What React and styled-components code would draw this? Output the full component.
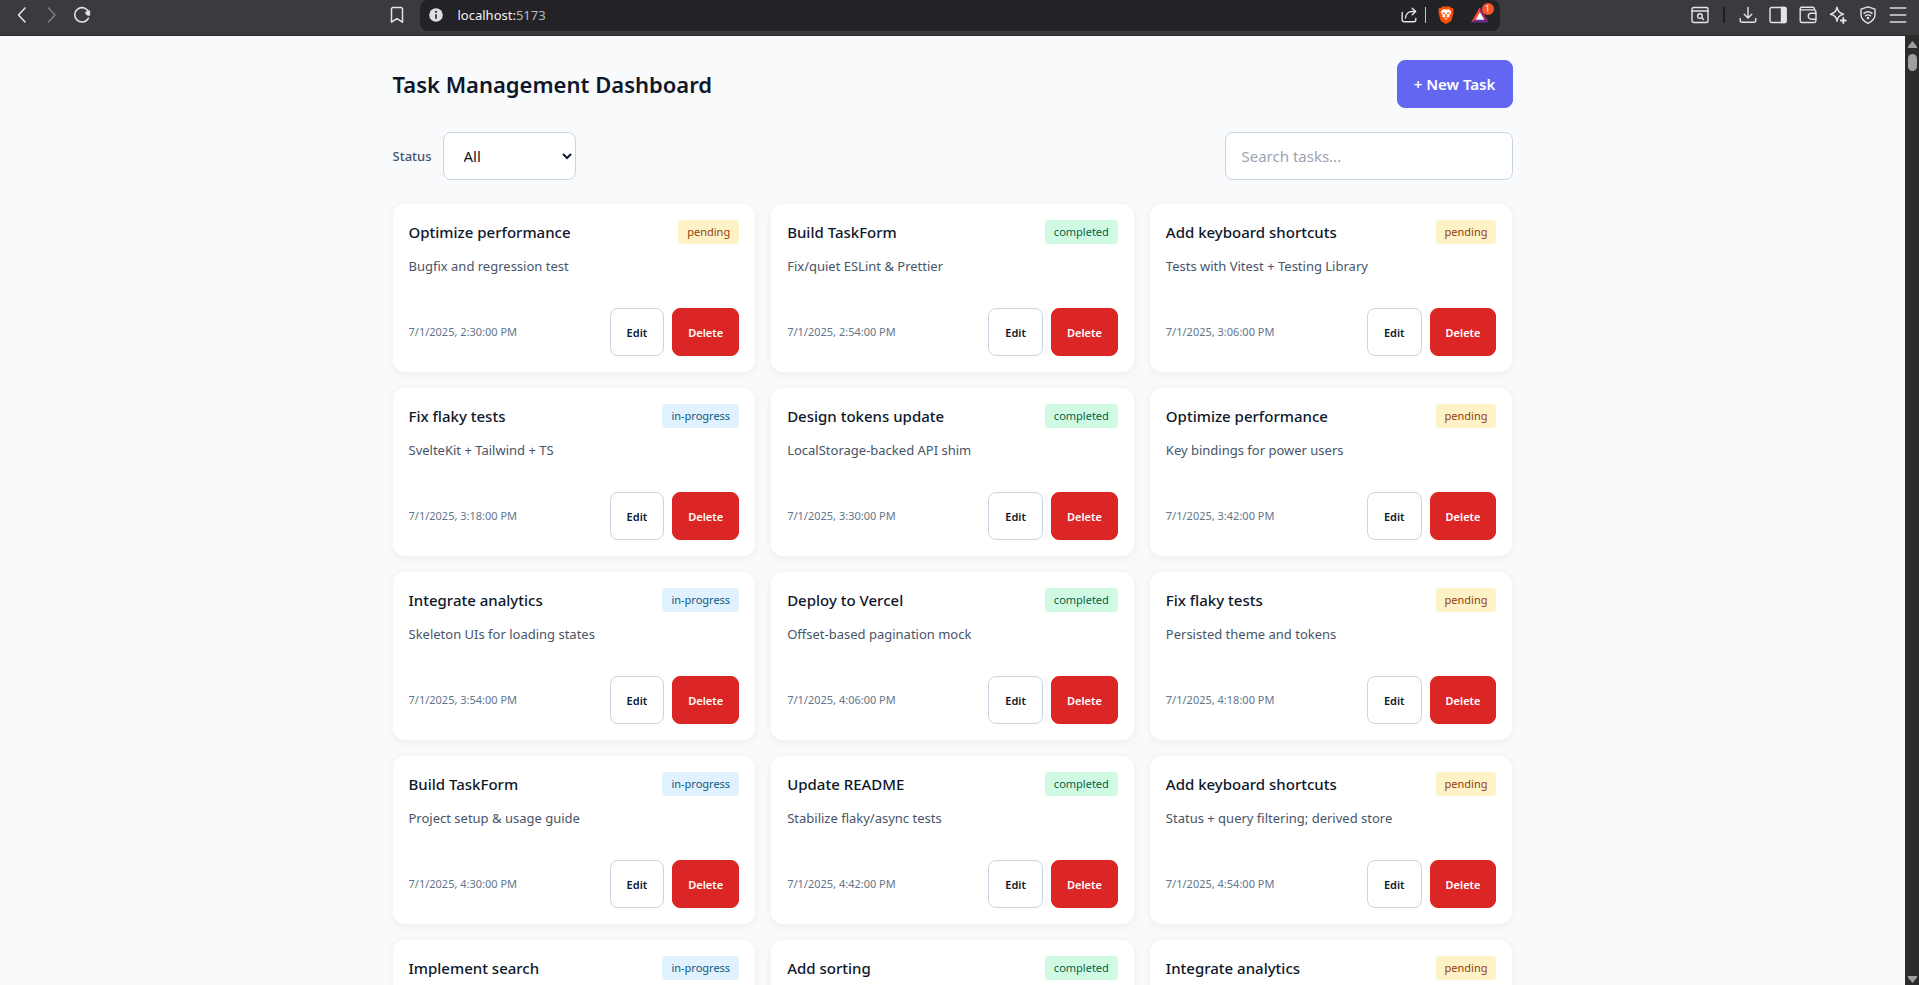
import React, { useState } from "react";
import styled, { createGlobalStyle, css } from "styled-components";

const GlobalStyle = createGlobalStyle`
  *, *::before, *::after { box-sizing: border-box; }
  body {
    margin: 0;
    font-family: "Segoe UI", "Noto Sans", "Open Sans", sans-serif;
    color: #0f172a;
    background: #f8fafc;
  }
  button, input, select { font: inherit; }
`;

/* ---------- browser frame ---------- */

const Window = styled.div`
  display: flex;
  flex-direction: column;
  height: 100vh;
`;

const Toolbar = styled.header`
  flex: none;
  display: grid;
  grid-template-columns: minmax(auto, 1fr) minmax(0, 1080px) minmax(auto, 1fr);
  height: 36px;
  background: #3b3a3f;
  border-bottom: 1px solid #2a292d;
`;

const ToolGroup = styled.div`
  display: flex;
  align-items: center;
  gap: ${(p) => p.$gap || 12}px;
  height: 30px;
`;

const NavTools = styled(ToolGroup)`
  padding: 0 16px 0 13px;
`;

const EndTools = styled(ToolGroup)`
  justify-content: flex-end;
  padding-right: 12px;
`;

const IconButton = styled.button`
  position: relative;
  display: flex;
  flex: none;
  padding: 0;
  border: 0;
  background: none;
  color: ${(p) => (p.$dim ? "#7d7c81" : "#e4e3e8")};
  cursor: pointer;

  svg { display: block; }
`;

const Push = styled.span`
  flex: 1;
`;

const ToolDivider = styled.span`
  width: ${(p) => (p.$light ? 1 : 2)}px;
  height: 16px;
  margin: 0 ${(p) => (p.$light ? 0 : 2)}px;
  background: ${(p) => (p.$light ? "#c4c3c8" : "#1f1e22")};
`;

const AddressBar = styled.div`
  display: flex;
  align-items: center;
  height: 31px;
  padding: 0 11px 1px 9px;
  gap: 12px;
  border-radius: 8px;
  background: #232227;
`;

const Address = styled.span`
  flex: 1;
  padding-left: 3px;
  font-size: 13px;
  line-height: 20px;
  color: #f2f2f5;
`;

const Port = styled.span`
  color: #b9b8be;
`;

const Count = styled.span`
  position: absolute;
  top: -4px;
  right: -5px;
  width: 12px;
  height: 12px;
  border-radius: 6px;
  background: #fb542b;
  color: #fff;
  font-size: 8px;
  line-height: 12px;
  text-align: center;
`;

const Body = styled.div`
  flex: 1;
  display: flex;
  min-height: 0;
`;

const Viewport = styled.div`
  flex: 1;
  min-width: 0;
  overflow-y: auto;
  scrollbar-width: none;
`;

const ScrollTrack = styled.div`
  flex: none;
  display: flex;
  flex-direction: column;
  align-items: center;
  width: 14px;
  padding: 5px 0 2px 1px;
  background: #2c2c2c;

  svg { display: block; flex: none; }
`;

const ScrollThumb = styled.span`
  width: 9px;
  height: 17px;
  margin: 6px 0 auto;
  border-radius: 5px;
  background: #9f9f9f;
`;

/* ---------- dashboard ---------- */

const Page = styled.main`
  max-width: 1152px;
  margin: 0 auto;
  padding: 24px 16px;
  display: flex;
  flex-direction: column;
  gap: 24px;
`;

const Bar = styled.div`
  display: flex;
  align-items: center;
  justify-content: space-between;
  gap: 16px;
`;

const Title = styled.h1`
  margin: 0;
  font-size: 22px;
  line-height: 32px;
  font-weight: 600;
`;

const variants = {
  primary: css`
    min-width: 116px;
    font-size: 15px;
    color: #fff;
    background: #6366f1;
    border-color: #6366f1;
  `,
  outline: css`
    padding: 0 16px;
    color: #0f172a;
    background: #fff;
    border-color: #cbd5e1;
  `,
  danger: css`
    color: #fff;
    background: #dc2626;
    border-color: #dc2626;
  `,
};

const Button = styled.button`
  height: 48px;
  padding: 0 15px;
  border: 1px solid;
  border-radius: 8px;
  font-size: 11px;
  font-weight: 600;
  white-space: nowrap;
  cursor: pointer;
  ${(p) => variants[p.$variant]}
`;

const Field = styled.div`
  display: flex;
  align-items: center;
  gap: 11px;
`;

const Label = styled.label`
  font-size: 13px;
  line-height: 20px;
  font-weight: 500;
  color: #475569;
`;

const control = css`
  height: 48px;
  border: 1px solid #cbd5e1;
  border-radius: 8px;
  background: #fff;
  color: #0f172a;
  font-size: 15px;
`;

const Select = styled.select`
  ${control}
  width: 133px;
  padding: 0 0 0 16px;
`;

const Search = styled.input`
  ${control}
  width: 288px;
  padding: 0 16px;

  &::placeholder { color: #9ca3af; opacity: 1; }
`;

const Grid = styled.ul`
  display: grid;
  grid-template-columns: repeat(3, minmax(0, 1fr));
  gap: 16px;
  margin: 0;
  padding: 0;
  list-style: none;
`;

const Card = styled.li`
  display: flex;
  flex-direction: column;
  gap: 12px;
  padding: 16px;
  border-radius: 12px;
  background: #fff;
  box-shadow: 0 2px 8px rgba(15, 23, 42, 0.06);
`;

const CardHead = styled.div`
  display: flex;
  align-items: flex-start;
  justify-content: space-between;
  gap: 8px;
`;

const CardTitle = styled.h2`
  margin: 0;
  font-size: 15px;
  line-height: 24px;
  font-weight: 500;
`;

const tones = {
  pending: css`background: #fef3c7; color: #92400e;`,
  completed: css`background: #d1fae5; color: #065f46;`,
  "in-progress": css`background: #e0f2fe; color: #075985;`,
};

const Badge = styled.span`
  padding: 4px 9px;
  border-radius: 4px;
  font-size: 11px;
  line-height: 16px;
  white-space: nowrap;
  ${(p) => tones[p.$status]}
`;

const Description = styled.p`
  min-height: 40px;
  margin: 0;
  font-size: 13px;
  line-height: 20px;
  color: #475569;
`;

const CardFoot = styled.div`
  display: flex;
  align-items: center;
  justify-content: space-between;
`;

const Time = styled.time`
  font-size: 11px;
  line-height: 16px;
  color: #64748b;
`;

const Actions = styled.div`
  display: flex;
  gap: 8px;
`;

/* ---------- icons ---------- */

const Icon = ({ w = 18, h = 18, sw = 1.4, children }) => (
  <svg width={w} height={h} viewBox={`0 0 ${w} ${h}`} fill="none" stroke="currentColor" strokeWidth={sw} strokeLinecap="round" strokeLinejoin="round" aria-hidden="true">
    {children}
  </svg>
);

const BackIcon = () => <Icon sw={1.6}><path d="M12 2 5.5 9l6.500 7" /></Icon>;
const ForwardIcon = () => <Icon sw={1.6}><path d="m5.500 2 6.500 7-6.500 7" /></Icon>;
const ReloadIcon = () => (
  <Icon sw={1.6}>
    <path d="M15.300 12.300A7.200 7.200 0 1 1 15.800 6.500" />
    <path d="M12.500 6.300 16.600 4.600 16.800 9.400 14 9Z" fill="currentColor" strokeWidth="0.800" />
  </Icon>
);
const BookmarkIcon = () => (
  <Icon w={14} sw={1.5}><path d="M1.500 3a1.500 1.500 0 0 1 1.500-1.500h8A1.500 1.500 0 0 1 12.500 3v13.200L7 12.600l-5.500 3.600Z" /></Icon>
);
const InfoIcon = () => (
  <svg width="14" height="14" viewBox="0 0 14 14" aria-hidden="true">
    <circle cx="7" cy="7" r="6.800" fill="#dfdee3" />
    <circle cx="7" cy="3.900" r="1.100" fill="#3b3a3f" />
    <path d="M7 6.200v4.600" stroke="#3b3a3f" strokeWidth="1.800" />
  </svg>
);
const ShareIcon = () => (
  <Icon w={16} h={16} sw={1.4}>
    <path d="M1.200 5.500v7.300a2 2 0 0 0 2 2h9.600a2 2 0 0 0 2-2v-1.300" />
    <path d="M4.500 11c.3-4 3-6.500 6.500-6.500h3.500M11.200 1.300l3.500 3.200-3.500 3.300" />
  </Icon>
);
const LionIcon = () => (
  <svg width="16" height="18" viewBox="0 0 16 18" aria-hidden="true">
    <path d="M4.300.4h7.400l1.400 1.500 1.700.1.900 2.300-.5 1.500.3 1-2 7.100c-.3 1-1 1.700-1.800 2.200L8 17.900l-3.700-1.800c-.8-.5-1.500-1.200-1.800-2.200L.5 6.800l.3-1L.3 4.300 1.200 2l1.700-.1Z" fill="#fb4f06" />
    <path d="m5 3.200 1.600.4h2.800l1.600-.4 2.200 2.600-.4 1.700-1.500 2 .2 1.300-1.800 1L8 14.300l-1.700-2.500-1.800-1 .2-1.300-1.500-2-.4-1.700Z" fill="#fff" />
    <path d="m4 6.200 2.600.6.500.6-.7.900L4.500 7.500ZM12 6.200l-2.600.6-.5.600.7.900 1.900-.8ZM7.300 8.300h1.400l.3 2-1 .6-1-.6ZM6 11.300l2-.5 2 .5-2 1.400Z" fill="#fb4f06" />
  </svg>
);
const RewardsIcon = () => (
  <svg width="18" height="16" viewBox="0 0 18 16" aria-hidden="true">
    <path d="M9 0 0 15.500 4.500 12.800 9 5Z" fill="#ff4724" />
    <path d="M9 0v5l4.500 7.800 4.500 2.700Z" fill="#9e1f63" />
    <path d="M0 15.500h18l-4.500-2.700h-9Z" fill="#662d91" />
    <path d="M9 5 4.500 12.800h9Z" fill="#fff" />
  </svg>
);
const PageSearchIcon = () => (
  <Icon>
    <rect x="1" y="1.500" width="16" height="15" rx="1.500" />
    <path d="M1 5h16" />
    <circle cx="8.900" cy="10.100" r="2.300" />
    <path d="m10.700 11.800 1.700 1.600" />
  </Icon>
);
const DownloadIcon = () => <Icon><path d="M9 1.500v10.300M5.200 8.200 9 11.900l3.800-3.700M1.200 12.500v1.800a2 2 0 0 0 2 2h11.600a2 2 0 0 0 2-2v-1.800" /></Icon>;
const SidebarIcon = () => (
  <Icon>
    <rect x="1" y="1.500" width="16" height="15" rx="1.500" />
    <path d="M12.500 1.500H16a1 1 0 0 1 1 1v13a1 1 0 0 1-1 1h-3.500Z" fill="currentColor" />
  </Icon>
);
const WalletIcon = () => (
  <Icon>
    <path d="M16.800 7.200V5.400a1.500 1.500 0 0 0-1.500-1.500H2.700A1.500 1.500 0 0 1 1.200 2.600a1.300 1.300 0 0 1 1.300-1.300h11.300a1.500 1.500 0 0 1 1.500 1.500v1.100M1.200 2.800v11.900a1.800 1.800 0 0 0 1.800 1.800h12.300a1.500 1.500 0 0 0 1.500-1.500v-1.800" />
    <path d="M17 7.200h-4.700a3 3 0 0 0 0 6H17Z" />
  </Icon>
);
const SparkleIcon = () => (
  <Icon>
    <path d="M8 1.200c.5 4.100 2.200 6.100 6.600 7-4.400.8-6.100 2.800-6.600 7-.5-4.200-2.200-6.200-6.600-7 4.400-.9 6.100-2.900 6.600-7Z" />
    <path d="M14.300 12v5M11.800 14.500h5" strokeWidth="1.800" />
  </Icon>
);
const ShieldIcon = () => (
  <Icon>
    <path d="M9 .8 16 3.200v5.600c0 4-3 6.700-7 8.500-4-1.800-7-4.500-7-8.500V3.200Z" />
    <path d="M5 7.400c2.500-2 5.500-2 8 0M6.500 9.800c1.600-1.200 3.400-1.200 5 0" />
    <circle cx="9" cy="12" r="0.600" fill="currentColor" />
  </Icon>
);
const MenuIcon = () => <Icon sw={2}><path d="M1.500 2h15M1.500 9h15M1.500 16h15" stroke="#b4b3b9" /></Icon>;

/* ---------- data ---------- */

const tasks = [
  ["Optimize performance", "pending", "Bugfix and regression test", "2:30"],
  ["Build TaskForm", "completed", "Fix/quiet ESLint & Prettier", "2:54"],
  ["Add keyboard shortcuts", "pending", "Tests with Vitest + Testing Library", "3:06"],
  ["Fix flaky tests", "in-progress", "SvelteKit + Tailwind + TS", "3:18"],
  ["Design tokens update", "completed", "LocalStorage-backed API shim", "3:30"],
  ["Optimize performance", "pending", "Key bindings for power users", "3:42"],
  ["Integrate analytics", "in-progress", "Skeleton UIs for loading states", "3:54"],
  ["Deploy to Vercel", "completed", "Offset-based pagination mock", "4:06"],
  ["Fix flaky tests", "pending", "Persisted theme and tokens", "4:18"],
  ["Build TaskForm", "in-progress", "Project setup & usage guide", "4:30"],
  ["Update README", "completed", "Stabilize flaky/async tests", "4:42"],
  ["Add keyboard shortcuts", "pending", "Status + query filtering; derived store", "4:54"],
  ["Implement search", "in-progress", "Bugfix and regression test", "5:06"],
  ["Add sorting", "completed", "Fix/quiet ESLint & Prettier", "5:18"],
  ["Integrate analytics", "pending", "Tests with Vitest + Testing Library", "5:30"],
].map(([title, status, description, time]) => ({ title, status, description, date: `7/1/2025, ${time}:00 PM` }));

function TaskCard({ task }) {
  return (
    <Card>
      <CardHead>
        <CardTitle>{task.title}</CardTitle>
        <Badge $status={task.status}>{task.status}</Badge>
      </CardHead>
      <Description>{task.description}</Description>
      <CardFoot>
        <Time>{task.date}</Time>
        <Actions>
          <Button type="button" $variant="outline">Edit</Button>
          <Button type="button" $variant="danger">Delete</Button>
        </Actions>
      </CardFoot>
    </Card>
  );
}

function BrowserToolbar() {
  return (
    <Toolbar>
      <NavTools>
        <IconButton aria-label="Back"><BackIcon /></IconButton>
        <IconButton aria-label="Forward" $dim><ForwardIcon /></IconButton>
        <IconButton aria-label="Reload"><ReloadIcon /></IconButton>
        <Push />
        <IconButton aria-label="Bookmark"><BookmarkIcon /></IconButton>
      </NavTools>
      <AddressBar>
        <IconButton aria-label="Site information"><InfoIcon /></IconButton>
        <Address>localhost:<Port>5173</Port></Address>
        <ToolGroup $gap={8}>
          <IconButton aria-label="Share"><ShareIcon /></IconButton>
          <ToolDivider $light />
        </ToolGroup>
        <ToolGroup $gap={17}>
          <IconButton aria-label="Shields"><LionIcon /></IconButton>
          <IconButton aria-label="Rewards"><RewardsIcon /><Count>1</Count></IconButton>
        </ToolGroup>
      </AddressBar>
      <EndTools>
        <IconButton aria-label="Find in page"><PageSearchIcon /></IconButton>
        <ToolDivider />
        <IconButton aria-label="Downloads"><DownloadIcon /></IconButton>
        <IconButton aria-label="Sidebar"><SidebarIcon /></IconButton>
        <IconButton aria-label="Wallet"><WalletIcon /></IconButton>
        <IconButton aria-label="Assistant"><SparkleIcon /></IconButton>
        <IconButton aria-label="VPN"><ShieldIcon /></IconButton>
        <IconButton aria-label="Menu"><MenuIcon /></IconButton>
      </EndTools>
    </Toolbar>
  );
}

export default function App() {
  const [status, setStatus] = useState("all");
  const [query, setQuery] = useState("");
  const shown = tasks.filter(
    (t) => (status === "all" || t.status === status) && t.title.toLowerCase().includes(query.toLowerCase())
  );

  return (
    <Window>
      <GlobalStyle />
      <BrowserToolbar />
      <Body>
        <Viewport>
          <Page>
            <Bar>
              <Title>Task Management Dashboard</Title>
              <Button type="button" $variant="primary">+ New Task</Button>
            </Bar>
            <Bar>
              <Field>
                <Label htmlFor="status">Status</Label>
                <Select id="status" value={status} onChange={(e) => setStatus(e.target.value)}>
                  <option value="all">All</option>
                  <option value="pending">pending</option>
                  <option value="in-progress">in-progress</option>
                  <option value="completed">completed</option>
                </Select>
              </Field>
              <Search aria-label="Search tasks" placeholder="Search tasks..." value={query} onChange={(e) => setQuery(e.target.value)} />
            </Bar>
            <Grid>
              {shown.map((task) => <TaskCard key={task.date} task={task} />)}
            </Grid>
          </Page>
        </Viewport>
        <ScrollTrack aria-hidden="true">
          <svg width="9" height="7" viewBox="0 0 9 7"><path d="M4.500 0 9 5.500V7H0V5.500Z" fill="#9f9f9f" /></svg>
          <ScrollThumb />
          <svg width="9" height="7" viewBox="0 0 9 7"><path d="M4.500 7 9 1.500V0H0v1.500Z" fill="#9f9f9f" /></svg>
        </ScrollTrack>
      </Body>
    </Window>
  );
}
